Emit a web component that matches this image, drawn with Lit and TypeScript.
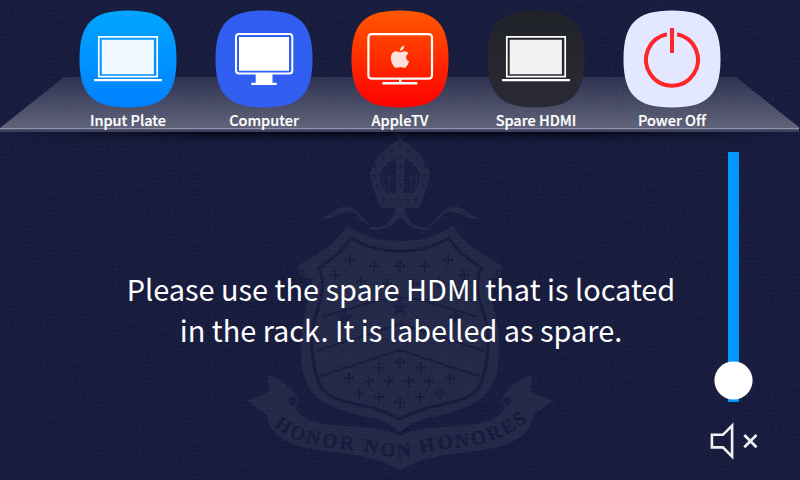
import { LitElement, html, css, svg } from "lit";
import { customElement, property } from "lit/decorators.js";

const laptop = svg`
  <path d="M19.300 26.400h58.400v39.800H19.300z" fill="none" stroke="#fff" stroke-width="1.7"/>
  <path d="M22.2 29.3h52.2v34.4H22.2z" fill="#fff" opacity=".94"/>
  <path d="M14.5 69.6h68" stroke="#fff" stroke-width="2.2"/>`;

const icons: Record<string, unknown> = {
  laptop,
  desktop: svg`
    <rect x="20.500" y="23.500" width="56.300" height="39.500" rx="3" fill="none" stroke="#fff" stroke-width="2"/>
    <path d="M23.500 26.500h50v33.700h-50z" fill="#fff"/>
    <path d="M40.200 63.500h16.800v8.700h4.200v2.300h-25.400v-2.300h4.400z" fill="#fff"/>`,
  tv: svg`
    <rect x="16.900" y="23.700" width="63.600" height="44.500" rx="3.200" fill="none" stroke="#fff" stroke-width="2.200"/>
    <path d="M48.700 68v5" stroke="#fff" stroke-width="2.400"/>
    <path d="M30.900 72.700h35" stroke="#fff" stroke-width="2.500"/>
    <g fill="#fff" opacity=".86">
      <path d="M48.400 40.500c.1-2.800 2-4.900 4.200-5.400.3 2.700-1.700 5.200-4.200 5.400z"/>
      <path d="M48.600 41.900c1.200 0 2.500-1.200 4.500-1.200 1.600 0 3 .8 3.900 2.100-3.500 2.100-2.900 6.800.6 8.200-.9 2.900-2.800 6.300-4.900 6.300-1.500 0-2-.9-3.900-.9s-2.500.9-3.900.9c-2.600 0-5.500-5.400-5.500-9.800 0-4.300 2.600-6.700 5.100-6.700 1.900 0 3 1.100 4.100 1.100z"/>
    </g>`,
  power: svg`
    <path d="M43.400 23.700A26 26 0 1 0 53.600 23.700" fill="none" stroke="#ff252a" stroke-width="4"/>
    <path d="M48.500 17.500v25" stroke="#ff252a" stroke-width="4"/>`,
};

const skins: Record<string, [string, string]> = {
  azure: ["#00a6ff", "#0080ff"],
  royal: ["#315df0", "#315df0"],
  flame: ["#ff5800", "#ff0000"],
  slate: ["#202228", "#2b2b37"],
  pale: ["#e3e7ff", "#e3e7ff"],
};

@customElement("source-button")
class SourceButton extends LitElement {
  @property() label = "";
  @property() icon = "laptop";
  @property() skin = "azure";
  static styles = css`
    :host { display: flex; flex-direction: column; align-items: center; width: 136px; }
    .tile { display: block; width: 98px; height: 98px; }
    .label {
      font: 500 14.500px/20px "Noto Sans CJK SC", sans-serif;
      font-variant-ligatures: none;
      -webkit-text-stroke: .2px #fff;
      color: #fff; margin-top: 2px; white-space: nowrap;
    }
  `;
  render() {
    const [top, bottom] = skins[this.skin];
    return html`
      <svg class="tile" viewBox="-.5 -.5 98 98">
        <defs><linearGradient id="skin" x2="0" y2="1">
          <stop stop-color=${top}/><stop offset="1" stop-color=${bottom}/>
        </linearGradient></defs>
        <path fill="url(#skin)" d="M48.500 0C84 0 97 13 97 48.500S84 97 48.500 97 0 84 0 48.500 13 0 48.500 0z"/>
        ${icons[this.icon]}
      </svg>
      <span class="label">${this.label}</span>`;
  }
}

const upperCrosses = [[350, 260], [374, 266], [400, 266], [425, 266], [448, 260], [335, 275], [361, 281], [387, 284], [413, 284], [439, 281], [464, 275]];
const lowerCrosses = [[400, 362], [379, 368], [421, 368], [349, 378], [369, 381], [389, 381], [409, 381], [429, 381], [450, 378], [359, 393], [379, 397], [400, 402], [420, 397], [440, 393]];
const stars = [[400, 308], [345, 318], [455, 318]];
const bandDots = [[400, 145], [391, 151], [383, 157], [375, 166], [374, 176], [377, 186], [409, 151], [417, 157], [425, 166], [426, 176], [423, 186], [400, 158], [400, 167], [400, 176], [400, 185], [384, 200], [392, 200], [400, 200], [408, 200], [416, 200]];

@customElement("school-crest")
class SchoolCrest extends LitElement {
  static styles = css`
    :host { display: block; }
    svg { display: block; width: 800px; height: 480px; }
    .light { fill: #242846; }
    .dark { fill: #181b3d; }
    .dot { fill: #1a1d3f; }
    .line { fill: none; stroke: #171a3b; stroke-width: 3; }
    .chevron { fill: none; stroke: #181b3c; stroke-width: 2; }
    .cross { fill: none; stroke: #181b3c; stroke-width: 1.700; }
    .strand { fill: none; stroke: #242846; stroke-width: 1.500; }
    .motto { font: bold 19.500px "Liberation Serif", serif; fill: #16193a; stroke: #16193a; stroke-width: .4; }
  `;
  render() {
    const half = svg`
      <path class="light" d="M316 219c13 0 18-12 31-13 12 2 15 15 28 21 15 1 18-12 21-19h6v6c-5 9-14 14-24 16-16 1-21-15-29-18-11 1-18 9-33 7z"/>
      <path class="dark" d="M349 213c8 7 13 15 21 15l3-2c-9-1-14-10-21-15z"/>
      <path class="dark" d="M396 158c-7 3-12 8-16 15 1 8 3 14 5 20h11z"/>
      <path class="strand" d="M389 174v18M385 178h8M385 193l-2-18"/>
      <path class="light" d="M246 400c10-2 17-5 23-9l-1-16c12 3 27 14 31 27l-4 6c10 16 31 16 51 18 21 2 38 1 54 10v34c-21-12-41-15-67-18-37-4-63-12-66-37z"/>
      <path class="dark" d="M289 400c2-6 7-4 8 1 0 4-5 7-7 4z"/>
    `;
    return html`
      <svg viewBox="0 0 800 480">
        <path class="light" d="M398 127h4v6h4v4h-4v3c11 6 24 19 28 33-2 13-7 24-10 35h-40c-3-11-8-22-10-35 4-14 17-27 28-33v-3h-4v-4h4z"/>
        <path class="light" d="M347 225c15 12 32 16 53 16s38-4 53-16c13 22 32 30 48 40 5 5 0 14-8 13l-5 2c3 22 12 42 11 70 0 20-4 36-17 48-17 13-43 17-57 21-12 3-18 8-25 13-7-5-13-10-25-13-14-4-40-8-57-21-13-12-17-28-17-48-1-28 8-48 11-70l-5-2c-8 1-13-8-8-13 16-10 35-18 48-40z"/>
        <path class="line" d="M351 238c17 10 31 13 49 13s32-3 49-13c8 13 19 21 32 30-5 11-5 26 3 46 5 17 6 38-1 64-5 24-35 24-56 30-13 4-19 7-27 11-8-4-14-7-27-11-21-6-51-6-56-30-7-26-6-47-1-64 8-20 8-35 3-46 13-9 24-17 32-30z"/>
        <path class="chevron" stroke-linejoin="round" d="M322 317 373 302Q400 293 427 302L478 317M316 351 400 324 484 351M318 377 400 350 482 377"/>
        <circle class="chevron" cx="301" cy="273" r="3"/>
        <circle class="chevron" cx="499" cy="273" r="3"/>
        ${half}
        <g transform="translate(800) scale(-1 1)">${half}</g>
        ${bandDots.map(([x, y]) => svg`<circle class="dot" cx=${x} cy=${y} r="1.700"/>`)}
        ${[...upperCrosses, ...lowerCrosses].map(([x, y]) => svg`
          <path class="cross" transform="translate(${x} ${y})" d="M0-5V6.500M-5 0H5M-1.500-4H1.500M-4-1.500V1.500M4-1.500V1.500"/>`)}
        ${stars.map(([x, y]) => svg`
          <path class="dot" transform="translate(${x} ${y})" d="M0-10 2-3 9-4 4 1 7 8 0 4-7 8-4 1-9-4-2-3z"/>`)}
        <defs><path id="ribbon" d="M274 426C298 447 330 446 357 451 375 453 385 458 402 457S430 449 452 448 505 441 532 417"/></defs>
        <text class="motto"><textPath href="#ribbon" textLength="266">HONOR NON HONORES</textPath></text>
      </svg>`;
  }
}

@customElement("volume-slider")
class VolumeSlider extends LitElement {
  static styles = css`
    :host { display: flex; flex-direction: column; align-items: center; width: 60px; }
    .track { width: 11px; height: 250px; border-radius: 1px; background: #0098ff; display: flex; flex-direction: column; align-items: center; justify-content: flex-end; }
    .knob { flex: none; display: block; width: 39px; height: 39px; margin-bottom: 2px; }
    .mute { display: block; width: 50px; height: 40px; margin-top: 18px; }
  `;
  render() {
    return html`
      <div class="track"><svg class="knob" viewBox="0 0 39 39"><circle cx="19.500" cy="19.500" r="19.100" fill="#fff"/></svg></div>
      <svg class="mute" viewBox="0 0 50 40" fill="none" stroke="#f1f1f5">
        <path stroke-width="2.600" d="M2.900 14.800v12.600h11l9.200 9.200V5.600l-9.200 9.200z"/>
        <path stroke-width="2.700" d="m35.300 15 12.200 12.200m0-12.200L35.300 27.200"/>
      </svg>`;
  }
}

@customElement("app-root")
class AppRoot extends LitElement {
  static styles = css`
    :host { display: block; }
    .screen { position: relative; display: flex; flex-direction: column; width: 800px; height: 480px; overflow: hidden; background: #171a3b; isolation: isolate; }
    .crest { position: absolute; inset: 0; z-index: -2; }
    .weave { position: absolute; inset: 0; z-index: -1; width: 100%; height: 100%; }
    .shelf { position: absolute; inset: 0; z-index: -1; width: 100%; height: 100%; }
    .dock { display: flex; justify-content: center; height: 132px; padding-top: 10px; box-sizing: border-box; }
    .body { display: grid; grid-template-columns: 100px 600px 100px; height: 348px; }
    .message { grid-column: 2; margin: 136px 0 0 2px; text-align: center; font: 400 28.900px/41px "Noto Sans CJK SC", sans-serif; color: #fff; }
    .volume { margin: 20px 0 0 3.500px; }
  `;
  render() {
    return html`
      <main class="screen">
        <school-crest class="crest"></school-crest>
        <svg class="weave">
          <defs>
            <pattern id="thread" width="6" height="4" patternUnits="userSpaceOnUse">
              <path d="M0 .5h4M3 2.500h3M0 2.500h1" stroke="#4c6090" stroke-opacity=".08"/>
              <path d="M1 1.500h3M4 3.500h2M0 3.500h1" stroke="#000018" stroke-opacity=".1"/>
            </pattern>
            <filter id="grain" x="0" y="0" width="100%" height="100%" color-interpolation-filters="sRGB">
              <feTurbulence type="fractalNoise" baseFrequency=".28 .5" numOctaves="2" seed="4"/>
              <feColorMatrix values="0 0 0 0 .2  0 0 0 0 .3  0 0 0 0 .5  .7 0 0 0 -.26"/>
            </filter>
          </defs>
          <rect width="800" height="480" fill="url(#thread)"/>
          <rect width="800" height="480" filter="url(#grain)" opacity=".4"/>
        </svg>
        <svg class="shelf" viewBox="0 0 800 480">
          <defs>
            <linearGradient id="glass" x2="0" y2="1">
              <stop stop-color="#fff" stop-opacity=".1"/><stop offset="1" stop-color="#fff" stop-opacity=".31"/>
            </linearGradient>
            <linearGradient id="shade" x2="0" y2="1">
              <stop stop-color="#03040e" stop-opacity=".85"/><stop offset=".45" stop-color="#03040e" stop-opacity=".32"/><stop offset="1" stop-color="#03040e" stop-opacity="0"/>
            </linearGradient>
            <linearGradient id="fade">
              <stop stop-color="#000"/><stop offset=".25" stop-color="#fff"/><stop offset=".75" stop-color="#fff"/><stop offset="1" stop-color="#000"/>
            </linearGradient>
            <mask id="ends"><rect y="130" width="800" height="20" fill="url(#fade)"/></mask>
          </defs>
          <path fill="url(#glass)" d="M64 77H736L800 128H0z"/>
          <path fill="#9194a9" d="M0 128h799v1H0z"/>
          <path fill="#50546e" d="M0 129h799v1H0z"/>
          <path fill="#3c4060" d="M0 130h799v2H0z"/>
          <rect y="132" width="800" height="11" fill="url(#shade)" mask="url(#ends)"/>
        </svg>
        <nav class="dock">
          <source-button label="Input Plate" icon="laptop" skin="azure"></source-button>
          <source-button label="Computer" icon="desktop" skin="royal"></source-button>
          <source-button label="AppleTV" icon="tv" skin="flame"></source-button>
          <source-button label="Spare HDMI" icon="laptop" skin="slate"></source-button>
          <source-button label="Power Off" icon="power" skin="pale"></source-button>
        </nav>
        <section class="body">
          <p class="message">Please use the spare HDMI that is located<br>in the rack. It is labelled as spare.</p>
          <volume-slider class="volume"></volume-slider>
        </section>
      </main>`;
  }
}
